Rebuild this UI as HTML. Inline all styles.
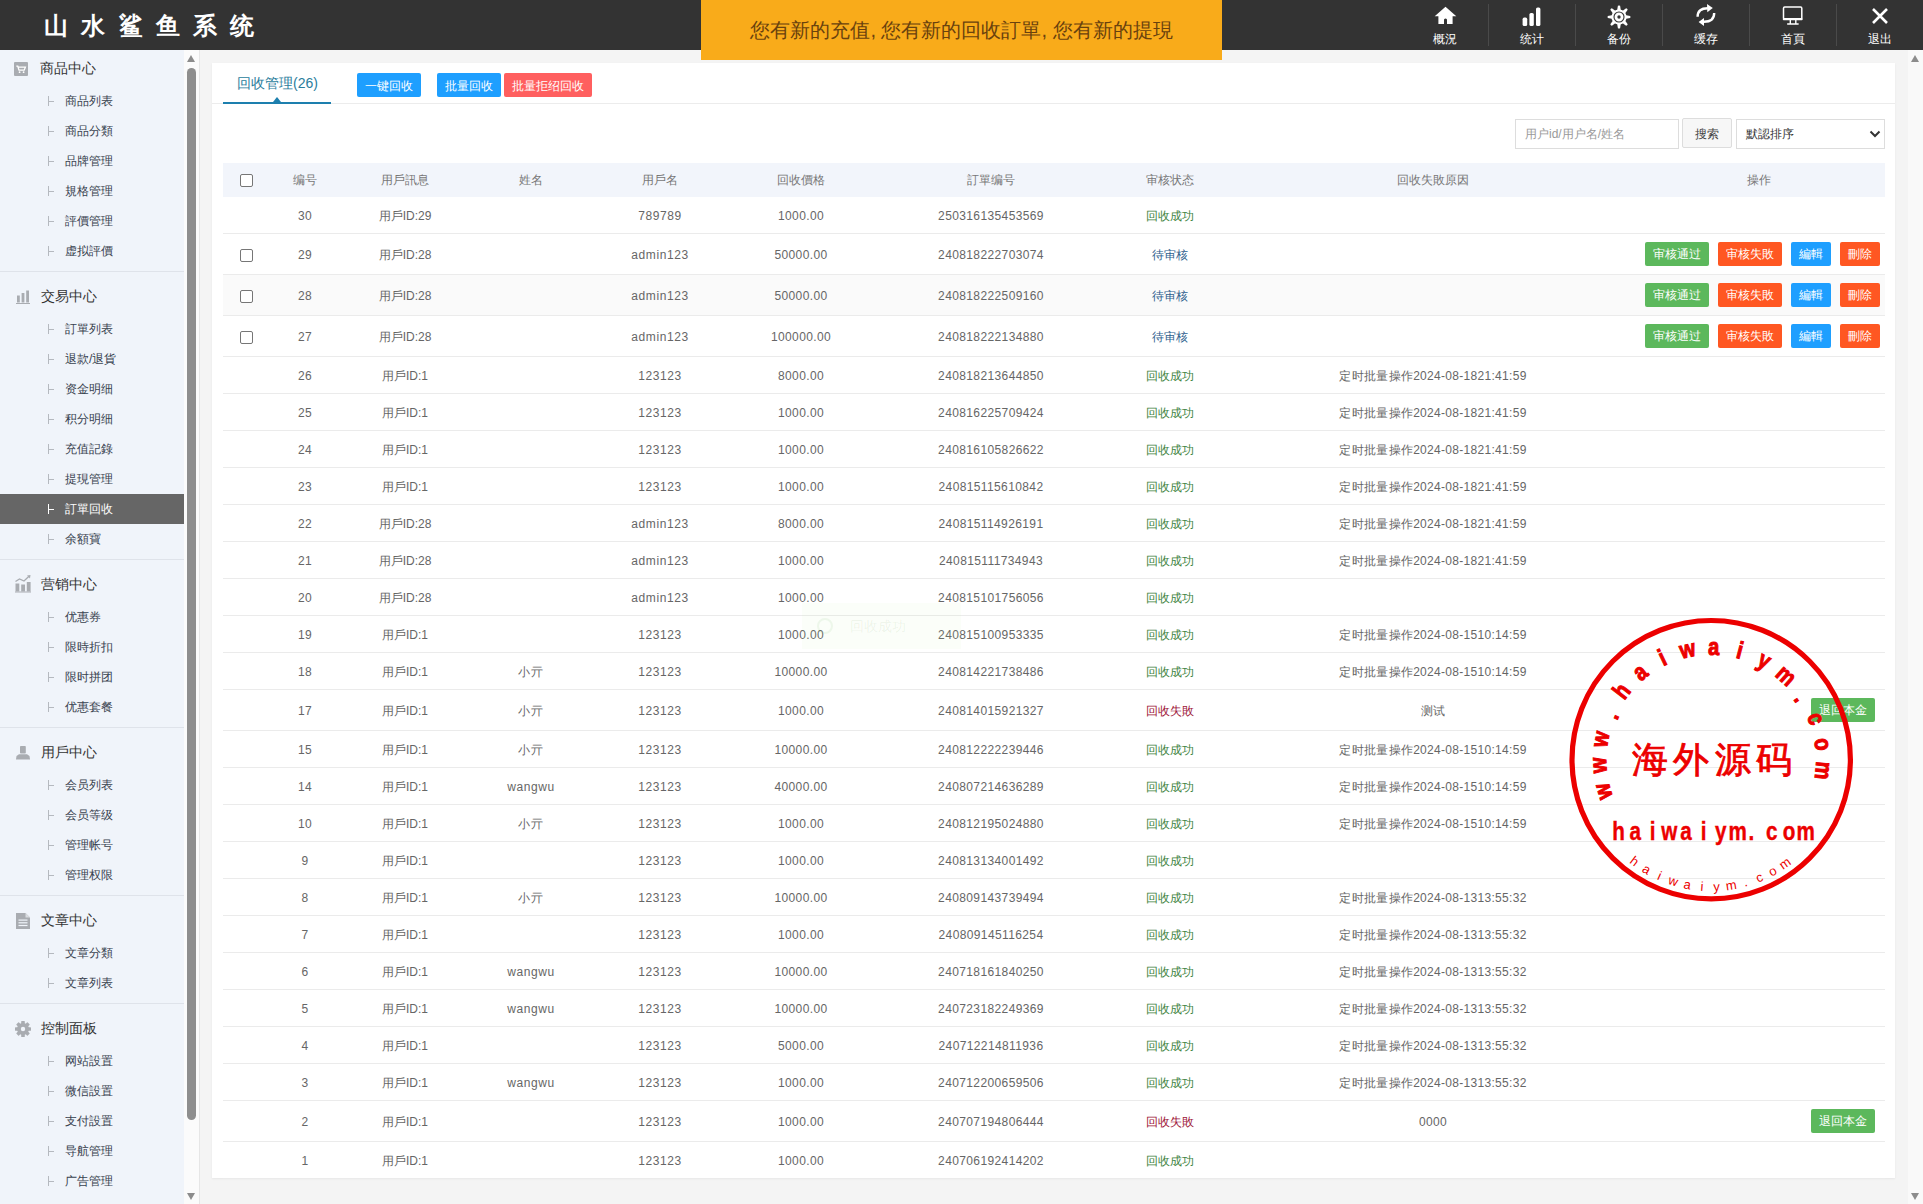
<!DOCTYPE html>
<html><head><meta charset="utf-8">
<style>
*{box-sizing:border-box;margin:0;padding:0}
html,body{width:1923px;height:1204px;overflow:hidden}
body{font-family:"Liberation Sans",sans-serif;background:#f4f4f4;position:relative;color:#666}
.hdr{position:absolute;left:0;top:0;width:1923px;height:50px;background:#333}
.logo{position:absolute;left:44px;top:10px;font-size:24px;line-height:32px;color:#fff;font-weight:bold;letter-spacing:13.3px;white-space:nowrap}
.nav{position:absolute;top:0;height:50px;width:87px;color:#fff;text-align:center}
.nav .ic{position:absolute;left:0;top:5px;width:87px;height:22px}
.nav .ic svg{display:block;margin:0 auto}
.nav .lb{position:absolute;left:0;top:31px;width:87px;font-size:12px;line-height:16px}
.nsep{position:absolute;top:4px;width:1px;height:42px;background:#4a4a4a}
.notice{position:absolute;left:701px;top:0;width:521px;height:60px;background:#f9ab1a;color:#6a420e;font-size:20px;line-height:24px;text-align:center;padding-top:18px;white-space:nowrap}
.side{position:absolute;left:0;top:50px;width:184px;height:1154px;background:#f0f4fa;overflow:hidden}
.side>div{position:absolute;left:0;width:184px;height:30px;line-height:30px;white-space:nowrap}
.mh .mi{position:absolute;left:14px;top:8px;width:18px;height:18px}
.mh .mi svg{display:block}
.mh .mt{position:absolute;left:39px;top:0;font-size:14px;color:#333}
.ms .tree{position:absolute;left:48px;top:10px;width:6px;height:10px;border-left:1px solid #b5b9bf}
.ms .tree:after{content:"";position:absolute;left:0;top:5px;width:5px;height:1px;background:#b5b9bf}
.ms .st2{position:absolute;left:65px;top:0;font-size:12px;color:#38424f}
.ms.act{background:#666}
.ms.act .st2{color:#fff}
.ms.act .tree{border-left-color:#fff}
.ms.act .tree:after{background:#fff}
.side .sep{height:1px;background:#dfe3ea;width:184px}
.sscroll{position:absolute;left:184px;top:50px;width:15px;height:1154px;background:#fbfbfb}
.sline{position:absolute;left:199px;top:50px;width:1px;height:1154px;background:#e6e6e6}
.sthumb{position:absolute;left:187px;top:68px;width:9px;height:1052px;border-radius:5px;background:#8e8e8e}
.arr-up{position:absolute;width:0;height:0;border-left:4.5px solid transparent;border-right:4.5px solid transparent;border-bottom:7px solid #8c8c8c}
.arr-dn{position:absolute;width:0;height:0;border-left:4.5px solid transparent;border-right:4.5px solid transparent;border-top:7px solid #8c8c8c}
.rscroll{position:absolute;left:1908px;top:50px;width:15px;height:1154px;background:#f9f9f9}
.panel{position:absolute;left:212px;top:63px;width:1683px;height:1115px;background:#fff;box-shadow:0 1px 2px rgba(0,0,0,.06)}
.tabline{position:absolute;left:0;top:40px;width:1683px;height:1px;background:#ececec}
.tab{position:absolute;left:25px;top:10px;font-size:14px;line-height:20px;color:#2a7d9c;white-space:nowrap}
.tabbar{position:absolute;left:11px;top:39px;width:108px;height:2px;background:#1d7fae}
.tabtri{position:absolute;left:61px;top:34px;width:0;height:0;border-left:4.5px solid transparent;border-right:4.5px solid transparent;border-bottom:5px solid #1d7fae}
.tb{position:absolute;top:10px;height:24px;line-height:26px;font-size:12px;color:#fff;text-align:center;border-radius:2px;white-space:nowrap}
.inp{position:absolute;left:1303px;top:56px;width:164px;height:30px;border:1px solid #ddd;font-size:12px;line-height:28px;color:#999;padding-left:9px;white-space:nowrap}
.sbtn{position:absolute;left:1470px;top:55px;width:50px;height:30px;border:1px solid #ddd;background:#f7f7f7;font-size:12px;line-height:30px;color:#444;text-align:center;border-radius:2px}
.sel{position:absolute;left:1524px;top:56px;width:149px;height:30px;border:1px solid #ddd;font-size:12px;line-height:28px;color:#333;padding-left:9px;white-space:nowrap}
.sel svg{position:absolute;right:3px;top:10px}
table{position:absolute;left:11px;top:100px;width:1662px;border-collapse:collapse;table-layout:fixed;font-size:12px;line-height:16px;color:#666}
th{height:34px;background:#f2f5fb;font-weight:normal;color:#777;text-align:center;padding:0}
td{height:37px;text-align:center;padding:2px 0 0 0;border-bottom:1px solid #ebebeb;white-space:nowrap}
tr.tall td{height:41px}
tbody tr:first-child td{height:36px;padding-top:2px}
tr.tall td{padding-top:3px}
tr.tall td.opc{padding-top:0}
tr.alt td{background:#fafafa}
.n{letter-spacing:.38px}
.u{letter-spacing:.6px}
.r{letter-spacing:.3px}
.cb{display:inline-block;width:13px;height:13px;border:1px solid #767676;border-radius:2px;background:#fff;vertical-align:middle}
.st.ok{color:#438543}
.st.wait{color:#2f5f8e}
.st.fail{color:#9e1639}
.opc{text-align:right;padding-right:5px;padding-top:0}
.ops{font-size:0;white-space:nowrap}
.bt{display:inline-block;height:24px;line-height:24px;font-size:12px;font-weight:normal;color:#fff;padding:0 8px;border-radius:2px;margin-left:9px}
.bt.g{background:#5cb85c}
.bt.o{background:#ff5722}
.bt.b{background:#1e9fff}
.ops.rf{margin-right:5px}
.toast{position:absolute;left:802px;top:603px;width:159px;height:46px;background:rgba(200,235,170,.07);font-size:14px;line-height:46px;color:rgba(60,120,40,.08);white-space:nowrap}
.toast i{position:absolute;left:15px;top:15px;width:16px;height:16px;border-radius:50%;border:2px solid rgba(80,160,60,.08)}
.toast span{position:absolute;left:48px;top:0}
.stamp{position:absolute;left:1560px;top:608px;width:304px;height:304px}
</style></head>
<body>
<div class="hdr">
 <div class="logo">山水鲨鱼系统</div>
 <div class="nav" style="left:1401px"><div class="ic"><svg width="24" height="20" viewBox="0 0 24 20"><path d="M12.5 1.8 L23.3 11.2 L19.6 11.2 L19.6 19 L14 19 L14 14.5 Q12.5 12.6 11 14.5 L11 19 L5.4 19 L5.4 11.2 L1.7 11.2 Z" fill="#fff"/></svg></div><div class="lb">概況</div></div>
 <div class="nsep" style="left:1488px"></div>
 <div class="nav" style="left:1488px"><div class="ic"><svg width="20" height="20" viewBox="0 0 20 20" style="margin-top:2px"><rect x="0.6" y="10.6" width="4.6" height="8.4" rx="1.6" fill="#fff"/><rect x="7.4" y="6" width="4.4" height="13" rx="1.6" fill="#fff"/><rect x="14" y="0.5" width="4.4" height="18.5" rx="1.6" fill="#fff"/></svg></div><div class="lb">统计</div></div>
 <div class="nsep" style="left:1575px"></div>
 <div class="nav" style="left:1575px"><div class="ic"><svg width="24" height="24" viewBox="0 0 24 24"><g fill="#fff"><path d="M10 6.2 L10.9 0.8 Q12 0.3 13.1 0.8 L14 6.2 Z" transform="rotate(0 12 12)"/><path d="M10 6.2 L10.9 0.8 Q12 0.3 13.1 0.8 L14 6.2 Z" transform="rotate(45 12 12)"/><path d="M10 6.2 L10.9 0.8 Q12 0.3 13.1 0.8 L14 6.2 Z" transform="rotate(90 12 12)"/><path d="M10 6.2 L10.9 0.8 Q12 0.3 13.1 0.8 L14 6.2 Z" transform="rotate(135 12 12)"/><path d="M10 6.2 L10.9 0.8 Q12 0.3 13.1 0.8 L14 6.2 Z" transform="rotate(180 12 12)"/><path d="M10 6.2 L10.9 0.8 Q12 0.3 13.1 0.8 L14 6.2 Z" transform="rotate(225 12 12)"/><path d="M10 6.2 L10.9 0.8 Q12 0.3 13.1 0.8 L14 6.2 Z" transform="rotate(270 12 12)"/><path d="M10 6.2 L10.9 0.8 Q12 0.3 13.1 0.8 L14 6.2 Z" transform="rotate(315 12 12)"/><circle cx="12" cy="12" r="7.6"/></g><circle cx="12" cy="12" r="5" fill="none" stroke="#333" stroke-width="1.1"/><circle cx="12" cy="12" r="1.7" fill="#333"/></svg></div><div class="lb">备份</div></div>
 <div class="nsep" style="left:1662px"></div>
 <div class="nav" style="left:1662px"><div class="ic"><svg width="22" height="24" viewBox="0 0 22 24" style="margin-top:-2px"><path d="M2.6 13.8 C2.6 8.2 6 5.2 12.8 5.2" fill="none" stroke="#fff" stroke-width="2.4"/><path d="M17.8 5.1 L12 0.9 L12.3 9.2 Z" fill="#fff"/><path d="M19.2 10 C19.2 15.6 15.8 18.8 9 18.8" fill="none" stroke="#fff" stroke-width="2.4"/><path d="M3.6 19 L9 14.9 L9 22.9 Z" fill="#fff"/></svg></div><div class="lb">缓存</div></div>
 <div class="nsep" style="left:1749px"></div>
 <div class="nav" style="left:1749px"><div class="ic"><svg width="22" height="20" viewBox="0 0 22 20"><rect x="1.5" y="2" width="18.3" height="12.2" rx="1.2" fill="none" stroke="#fff" stroke-width="1.5"/><rect x="0.8" y="13" width="19.8" height="2.3" rx="0.8" fill="#fff"/><rect x="7.6" y="15" width="1.4" height="4" fill="#fff"/><rect x="13.1" y="15" width="1.4" height="4" fill="#fff"/><rect x="5" y="18.2" width="11.8" height="1.5" rx="0.6" fill="#fff"/></svg></div><div class="lb">首頁</div></div>
 <div class="nsep" style="left:1836px"></div>
 <div class="nav" style="left:1836px"><div class="ic"><svg width="18" height="18" viewBox="0 0 18 18" style="margin-top:2px"><path d="M2 2 L16 16 M16 2 L2 16" stroke="#fff" stroke-width="2.6"/></svg></div><div class="lb">退出</div></div>
</div>

<div class="side">
<div class="mh" style="top:3px"><span class="mi" style="left:14px;top:9px"><svg width="14" height="14" viewBox="0 0 14 14"><rect x="0" y="0" width="14" height="14" rx="1" fill="#a9acb1"/><path d="M2.3 4.2 L3.8 4.2 L5 8.2 L10.2 8.2 L11.4 5.2 L4.6 5.2" fill="none" stroke="#fff" stroke-width="1.3"/><circle cx="5.6" cy="10.2" r="0.9" fill="#fff"/><circle cx="9.6" cy="10.2" r="0.9" fill="#fff"/></svg></span><span class="mt" style="left:40px">商品中心</span></div>
<div class="ms" style="top:36px"><span class="tree"></span><span class="st2">商品列表</span></div>
<div class="ms" style="top:66px"><span class="tree"></span><span class="st2">商品分類</span></div>
<div class="ms" style="top:96px"><span class="tree"></span><span class="st2">品牌管理</span></div>
<div class="ms" style="top:126px"><span class="tree"></span><span class="st2">規格管理</span></div>
<div class="ms" style="top:156px"><span class="tree"></span><span class="st2">評價管理</span></div>
<div class="ms" style="top:186px"><span class="tree"></span><span class="st2">虚拟評價</span></div>
<div class="sep" style="top:221px"></div>
<div class="mh" style="top:231px"><span class="mi" style="left:16px;top:9px"><svg width="14" height="14" viewBox="0 0 14 14"><rect x="1" y="5.5" width="2.8" height="7" fill="#a9acb1"/><rect x="5.6" y="3" width="2.8" height="9.5" fill="#a9acb1"/><rect x="10.2" y="0.5" width="2.8" height="12" fill="#a9acb1"/><rect x="0" y="13" width="14" height="1" fill="#a9acb1"/></svg></span><span class="mt" style="left:41px">交易中心</span></div>
<div class="ms" style="top:264px"><span class="tree"></span><span class="st2">訂單列表</span></div>
<div class="ms" style="top:294px"><span class="tree"></span><span class="st2">退款/退貨</span></div>
<div class="ms" style="top:324px"><span class="tree"></span><span class="st2">资金明细</span></div>
<div class="ms" style="top:354px"><span class="tree"></span><span class="st2">积分明细</span></div>
<div class="ms" style="top:384px"><span class="tree"></span><span class="st2">充值記錄</span></div>
<div class="ms" style="top:414px"><span class="tree"></span><span class="st2">提現管理</span></div>
<div class="ms act" style="top:444px"><span class="tree"></span><span class="st2">訂單回收</span></div>
<div class="ms" style="top:474px"><span class="tree"></span><span class="st2">余額寶</span></div>
<div class="sep" style="top:509px"></div>
<div class="mh" style="top:519px"><span class="mi" style="left:14px;top:6px"><svg width="18" height="18" viewBox="0 0 18 18"><path d="M1.5 6.5 L5.5 4 L10 6 L15 1.2" fill="none" stroke="#a9acb1" stroke-width="1.3"/><path d="M13 0.5 L16.5 0 L16 3.5 Z" fill="#a9acb1"/><rect x="1.5" y="8.5" width="3.8" height="8" fill="#a9acb1"/><rect x="7.2" y="9.5" width="3.8" height="7" fill="#a9acb1"/><rect x="12.8" y="7" width="3.8" height="9.5" fill="#a9acb1"/><rect x="1" y="16.5" width="16" height="1" fill="#a9acb1"/></svg></span><span class="mt" style="left:41px">营销中心</span></div>
<div class="ms" style="top:552px"><span class="tree"></span><span class="st2">优惠券</span></div>
<div class="ms" style="top:582px"><span class="tree"></span><span class="st2">限時折扣</span></div>
<div class="ms" style="top:612px"><span class="tree"></span><span class="st2">限时拼团</span></div>
<div class="ms" style="top:642px"><span class="tree"></span><span class="st2">优惠套餐</span></div>
<div class="sep" style="top:677px"></div>
<div class="mh" style="top:687px"><span class="mi" style="left:16px;top:9px"><svg width="14" height="14" viewBox="0 0 14 14"><rect x="4" y="0" width="5.8" height="7.5" rx="0.8" fill="#a9acb1"/><path d="M0 13.5 L0.5 10 L3 8.3 L11 8.3 L13.5 10 L14 13.5 Z" fill="#a9acb1"/></svg></span><span class="mt" style="left:41px">用戶中心</span></div>
<div class="ms" style="top:720px"><span class="tree"></span><span class="st2">会员列表</span></div>
<div class="ms" style="top:750px"><span class="tree"></span><span class="st2">会员等级</span></div>
<div class="ms" style="top:780px"><span class="tree"></span><span class="st2">管理帐号</span></div>
<div class="ms" style="top:810px"><span class="tree"></span><span class="st2">管理权限</span></div>
<div class="sep" style="top:845px"></div>
<div class="mh" style="top:855px"><span class="mi" style="left:16px;top:8px"><svg width="14" height="16" viewBox="0 0 14 16"><path d="M0 0 L9.5 0 L14 4.5 L14 16 L0 16 Z" fill="#a9acb1"/><path d="M9.5 0 L9.5 4.5 L14 4.5 Z" fill="#d9dce0"/><rect x="2.5" y="6.5" width="9" height="1.2" fill="#f0f4fa"/><rect x="2.5" y="9.2" width="9" height="1.2" fill="#f0f4fa"/><rect x="2.5" y="11.9" width="9" height="1.2" fill="#f0f4fa"/></svg></span><span class="mt" style="left:41px">文章中心</span></div>
<div class="ms" style="top:888px"><span class="tree"></span><span class="st2">文章分類</span></div>
<div class="ms" style="top:918px"><span class="tree"></span><span class="st2">文章列表</span></div>
<div class="sep" style="top:953px"></div>
<div class="mh" style="top:963px"><span class="mi" style="left:15px;top:8px"><svg width="16" height="16" viewBox="0 0 16 16"><g fill="#a9acb1"><circle cx="8" cy="8" r="6"/><rect x="6.2" y="0" width="3.6" height="16" rx="0.6"/><rect x="6.2" y="0" width="3.6" height="16" rx="0.6" transform="rotate(45 8 8)"/><rect x="6.2" y="0" width="3.6" height="16" rx="0.6" transform="rotate(90 8 8)"/><rect x="6.2" y="0" width="3.6" height="16" rx="0.6" transform="rotate(135 8 8)"/></g><circle cx="8" cy="8" r="2.2" fill="#f0f4fa"/></svg></span><span class="mt" style="left:41px">控制面板</span></div>
<div class="ms" style="top:996px"><span class="tree"></span><span class="st2">网站設置</span></div>
<div class="ms" style="top:1026px"><span class="tree"></span><span class="st2">微信設置</span></div>
<div class="ms" style="top:1056px"><span class="tree"></span><span class="st2">支付設置</span></div>
<div class="ms" style="top:1086px"><span class="tree"></span><span class="st2">导航管理</span></div>
<div class="ms" style="top:1116px"><span class="tree"></span><span class="st2">广告管理</span></div>
</div>
<div class="sscroll"></div>
<div class="sline"></div>
<div class="arr-up" style="left:187px;top:55px"></div>
<div class="sthumb"></div>
<div class="arr-dn" style="left:187px;top:1193px"></div>

<div class="rscroll"></div>
<div class="arr-up" style="left:1911px;top:55px"></div>
<div class="arr-dn" style="left:1911px;top:1193px"></div>

<div class="panel">
 <div class="tabline"></div>
 <div class="tab">回收管理(26)</div>
 <div class="tabbar"></div>
 <div class="tabtri"></div>
 <div class="tb" style="left:145px;width:64px;background:#1e9fff">一键回收</div>
 <div class="tb" style="left:225px;width:64px;background:#1e9fff">批量回收</div>
 <div class="tb" style="left:292px;width:88px;background:#ff5f5f">批量拒绍回收</div>
 <div class="inp">用户id/用户名/姓名</div>
 <div class="sbtn">搜索</div>
 <div class="sel">默認排序<svg width="12" height="8" viewBox="0 0 12 8"><path d="M1.5 1.5 L6 6 L10.5 1.5" fill="none" stroke="#333" stroke-width="2"/></svg></div>
 <table>
  <colgroup><col style="width:46px"><col style="width:72px"><col style="width:128px"><col style="width:124px"><col style="width:134px"><col style="width:148px"><col style="width:232px"><col style="width:126px"><col style="width:400px"><col style="width:252px"></colgroup>
  <thead><tr><th><span class="cb"></span></th><th>编号</th><th>用戶訊息</th><th>姓名</th><th>用戶名</th><th>回收價格</th><th>訂單编号</th><th>审核状态</th><th>回收失敗原因</th><th>操作</th></tr></thead>
  <tbody>
<tr class=""><td></td><td class="n">30</td><td>用戶ID:29</td><td class="u"></td><td class="u">789789</td><td class="n">1000.00</td><td class="n">250316135453569</td><td class="st ok">回收成功</td><td class="r"></td><td class="opc"></td></tr>
<tr class="tall"><td><span class="cb"></span></td><td class="n">29</td><td>用戶ID:28</td><td class="u"></td><td class="u">admin123</td><td class="n">50000.00</td><td class="n">240818222703074</td><td class="st wait">待审核</td><td class="r"></td><td class="opc"><span class="ops"><b class="bt g">审核通过</b><b class="bt o">审核失敗</b><b class="bt b">編輯</b><b class="bt o e">刪除</b></span></td></tr>
<tr class="tall alt"><td><span class="cb"></span></td><td class="n">28</td><td>用戶ID:28</td><td class="u"></td><td class="u">admin123</td><td class="n">50000.00</td><td class="n">240818222509160</td><td class="st wait">待审核</td><td class="r"></td><td class="opc"><span class="ops"><b class="bt g">审核通过</b><b class="bt o">审核失敗</b><b class="bt b">編輯</b><b class="bt o e">刪除</b></span></td></tr>
<tr class="tall"><td><span class="cb"></span></td><td class="n">27</td><td>用戶ID:28</td><td class="u"></td><td class="u">admin123</td><td class="n">100000.00</td><td class="n">240818222134880</td><td class="st wait">待审核</td><td class="r"></td><td class="opc"><span class="ops"><b class="bt g">审核通过</b><b class="bt o">审核失敗</b><b class="bt b">編輯</b><b class="bt o e">刪除</b></span></td></tr>
<tr class=""><td></td><td class="n">26</td><td>用戶ID:1</td><td class="u"></td><td class="u">123123</td><td class="n">8000.00</td><td class="n">240818213644850</td><td class="st ok">回收成功</td><td class="r">定时批量操作2024-08-1821:41:59</td><td class="opc"></td></tr>
<tr class=""><td></td><td class="n">25</td><td>用戶ID:1</td><td class="u"></td><td class="u">123123</td><td class="n">1000.00</td><td class="n">240816225709424</td><td class="st ok">回收成功</td><td class="r">定时批量操作2024-08-1821:41:59</td><td class="opc"></td></tr>
<tr class=""><td></td><td class="n">24</td><td>用戶ID:1</td><td class="u"></td><td class="u">123123</td><td class="n">1000.00</td><td class="n">240816105826622</td><td class="st ok">回收成功</td><td class="r">定时批量操作2024-08-1821:41:59</td><td class="opc"></td></tr>
<tr class=""><td></td><td class="n">23</td><td>用戶ID:1</td><td class="u"></td><td class="u">123123</td><td class="n">1000.00</td><td class="n">240815115610842</td><td class="st ok">回收成功</td><td class="r">定时批量操作2024-08-1821:41:59</td><td class="opc"></td></tr>
<tr class=""><td></td><td class="n">22</td><td>用戶ID:28</td><td class="u"></td><td class="u">admin123</td><td class="n">8000.00</td><td class="n">240815114926191</td><td class="st ok">回收成功</td><td class="r">定时批量操作2024-08-1821:41:59</td><td class="opc"></td></tr>
<tr class=""><td></td><td class="n">21</td><td>用戶ID:28</td><td class="u"></td><td class="u">admin123</td><td class="n">1000.00</td><td class="n">240815111734943</td><td class="st ok">回收成功</td><td class="r">定时批量操作2024-08-1821:41:59</td><td class="opc"></td></tr>
<tr class=""><td></td><td class="n">20</td><td>用戶ID:28</td><td class="u"></td><td class="u">admin123</td><td class="n">1000.00</td><td class="n">240815101756056</td><td class="st ok">回收成功</td><td class="r"></td><td class="opc"></td></tr>
<tr class=""><td></td><td class="n">19</td><td>用戶ID:1</td><td class="u"></td><td class="u">123123</td><td class="n">1000.00</td><td class="n">240815100953335</td><td class="st ok">回收成功</td><td class="r">定时批量操作2024-08-1510:14:59</td><td class="opc"></td></tr>
<tr class=""><td></td><td class="n">18</td><td>用戶ID:1</td><td class="u">小亓</td><td class="u">123123</td><td class="n">10000.00</td><td class="n">240814221738486</td><td class="st ok">回收成功</td><td class="r">定时批量操作2024-08-1510:14:59</td><td class="opc"></td></tr>
<tr class="tall"><td></td><td class="n">17</td><td>用戶ID:1</td><td class="u">小亓</td><td class="u">123123</td><td class="n">1000.00</td><td class="n">240814015921327</td><td class="st fail">回收失敗</td><td class="r">测试</td><td class="opc"><span class="ops rf"><b class="bt g">退回本金</b></span></td></tr>
<tr class=""><td></td><td class="n">15</td><td>用戶ID:1</td><td class="u">小亓</td><td class="u">123123</td><td class="n">10000.00</td><td class="n">240812222239446</td><td class="st ok">回收成功</td><td class="r">定时批量操作2024-08-1510:14:59</td><td class="opc"></td></tr>
<tr class=""><td></td><td class="n">14</td><td>用戶ID:1</td><td class="u">wangwu</td><td class="u">123123</td><td class="n">40000.00</td><td class="n">240807214636289</td><td class="st ok">回收成功</td><td class="r">定时批量操作2024-08-1510:14:59</td><td class="opc"></td></tr>
<tr class=""><td></td><td class="n">10</td><td>用戶ID:1</td><td class="u">小亓</td><td class="u">123123</td><td class="n">1000.00</td><td class="n">240812195024880</td><td class="st ok">回收成功</td><td class="r">定时批量操作2024-08-1510:14:59</td><td class="opc"></td></tr>
<tr class=""><td></td><td class="n">9</td><td>用戶ID:1</td><td class="u"></td><td class="u">123123</td><td class="n">1000.00</td><td class="n">240813134001492</td><td class="st ok">回收成功</td><td class="r"></td><td class="opc"></td></tr>
<tr class=""><td></td><td class="n">8</td><td>用戶ID:1</td><td class="u">小亓</td><td class="u">123123</td><td class="n">10000.00</td><td class="n">240809143739494</td><td class="st ok">回收成功</td><td class="r">定时批量操作2024-08-1313:55:32</td><td class="opc"></td></tr>
<tr class=""><td></td><td class="n">7</td><td>用戶ID:1</td><td class="u"></td><td class="u">123123</td><td class="n">1000.00</td><td class="n">240809145116254</td><td class="st ok">回收成功</td><td class="r">定时批量操作2024-08-1313:55:32</td><td class="opc"></td></tr>
<tr class=""><td></td><td class="n">6</td><td>用戶ID:1</td><td class="u">wangwu</td><td class="u">123123</td><td class="n">10000.00</td><td class="n">240718161840250</td><td class="st ok">回收成功</td><td class="r">定时批量操作2024-08-1313:55:32</td><td class="opc"></td></tr>
<tr class=""><td></td><td class="n">5</td><td>用戶ID:1</td><td class="u">wangwu</td><td class="u">123123</td><td class="n">10000.00</td><td class="n">240723182249369</td><td class="st ok">回收成功</td><td class="r">定时批量操作2024-08-1313:55:32</td><td class="opc"></td></tr>
<tr class=""><td></td><td class="n">4</td><td>用戶ID:1</td><td class="u"></td><td class="u">123123</td><td class="n">5000.00</td><td class="n">240712214811936</td><td class="st ok">回收成功</td><td class="r">定时批量操作2024-08-1313:55:32</td><td class="opc"></td></tr>
<tr class=""><td></td><td class="n">3</td><td>用戶ID:1</td><td class="u">wangwu</td><td class="u">123123</td><td class="n">1000.00</td><td class="n">240712200659506</td><td class="st ok">回收成功</td><td class="r">定时批量操作2024-08-1313:55:32</td><td class="opc"></td></tr>
<tr class="tall"><td></td><td class="n">2</td><td>用戶ID:1</td><td class="u"></td><td class="u">123123</td><td class="n">1000.00</td><td class="n">240707194806444</td><td class="st fail">回收失敗</td><td class="r">0000</td><td class="opc"><span class="ops rf"><b class="bt g">退回本金</b></span></td></tr>
<tr class=""><td></td><td class="n">1</td><td>用戶ID:1</td><td class="u"></td><td class="u">123123</td><td class="n">1000.00</td><td class="n">240706192414202</td><td class="st ok">回收成功</td><td class="r"></td><td class="opc"></td></tr>
  </tbody>
 </table>
</div>
<div class="toast"><i></i><span>回收成功</span></div>

<div class="stamp"><svg width="304" height="304" viewBox="0 0 304 304" style="overflow:visible"><circle cx="151.2" cy="151.7" r="139.2" fill="none" stroke="#ec0000" stroke-width="5.2"/><text transform="translate(42.8,183.6) rotate(-106.4) scale(1,1.2)" x="0" y="0" text-anchor="middle" dominant-baseline="central" font-family="Liberation Sans" font-weight="bold" font-size="20" fill="#ec0000" stroke="#ec0000" stroke-width="0.9">w</text><text transform="translate(38.3,157.5) rotate(-92.9) scale(1,1.2)" x="0" y="0" text-anchor="middle" dominant-baseline="central" font-family="Liberation Sans" font-weight="bold" font-size="20" fill="#ec0000" stroke="#ec0000" stroke-width="0.9">w</text><text transform="translate(40.1,131.1) rotate(-79.5) scale(1,1.2)" x="0" y="0" text-anchor="middle" dominant-baseline="central" font-family="Liberation Sans" font-weight="bold" font-size="20" fill="#ec0000" stroke="#ec0000" stroke-width="0.9">w</text><text transform="translate(50.7,107.0) rotate(-66.0) scale(1,1.2)" x="0" y="0" text-anchor="middle" dominant-baseline="central" font-family="Liberation Sans" font-weight="bold" font-size="20" fill="#ec0000" stroke="#ec0000" stroke-width="0.9">.</text><text transform="translate(61.5,83.0) rotate(-52.6) scale(1,1.2)" x="0" y="0" text-anchor="middle" dominant-baseline="central" font-family="Liberation Sans" font-weight="bold" font-size="20" fill="#ec0000" stroke="#ec0000" stroke-width="0.9">h</text><text transform="translate(79.9,64.0) rotate(-39.1) scale(1,1.2)" x="0" y="0" text-anchor="middle" dominant-baseline="central" font-family="Liberation Sans" font-weight="bold" font-size="20" fill="#ec0000" stroke="#ec0000" stroke-width="0.9">a</text><text transform="translate(102.3,49.8) rotate(-25.6) scale(1,1.2)" x="0" y="0" text-anchor="middle" dominant-baseline="central" font-family="Liberation Sans" font-weight="bold" font-size="20" fill="#ec0000" stroke="#ec0000" stroke-width="0.9">i</text><text transform="translate(127.4,41.2) rotate(-12.2) scale(1,1.2)" x="0" y="0" text-anchor="middle" dominant-baseline="central" font-family="Liberation Sans" font-weight="bold" font-size="20" fill="#ec0000" stroke="#ec0000" stroke-width="0.9">w</text><text transform="translate(153.7,38.7) rotate(1.3) scale(1,1.2)" x="0" y="0" text-anchor="middle" dominant-baseline="central" font-family="Liberation Sans" font-weight="bold" font-size="20" fill="#ec0000" stroke="#ec0000" stroke-width="0.9">a</text><text transform="translate(180.0,42.4) rotate(14.7) scale(1,1.2)" x="0" y="0" text-anchor="middle" dominant-baseline="central" font-family="Liberation Sans" font-weight="bold" font-size="20" fill="#ec0000" stroke="#ec0000" stroke-width="0.9">i</text><text transform="translate(204.6,52.1) rotate(28.2) scale(1,1.2)" x="0" y="0" text-anchor="middle" dominant-baseline="central" font-family="Liberation Sans" font-weight="bold" font-size="20" fill="#ec0000" stroke="#ec0000" stroke-width="0.9">y</text><text transform="translate(226.3,67.3) rotate(41.7) scale(1,1.2)" x="0" y="0" text-anchor="middle" dominant-baseline="central" font-family="Liberation Sans" font-weight="bold" font-size="20" fill="#ec0000" stroke="#ec0000" stroke-width="0.9">m</text><text transform="translate(241.4,88.8) rotate(55.1) scale(1,1.2)" x="0" y="0" text-anchor="middle" dominant-baseline="central" font-family="Liberation Sans" font-weight="bold" font-size="20" fill="#ec0000" stroke="#ec0000" stroke-width="0.9">.</text><text transform="translate(256.4,110.4) rotate(68.6) scale(1,1.2)" x="0" y="0" text-anchor="middle" dominant-baseline="central" font-family="Liberation Sans" font-weight="bold" font-size="20" fill="#ec0000" stroke="#ec0000" stroke-width="0.9">c</text><text transform="translate(263.1,136.1) rotate(82.0) scale(1,1.2)" x="0" y="0" text-anchor="middle" dominant-baseline="central" font-family="Liberation Sans" font-weight="bold" font-size="20" fill="#ec0000" stroke="#ec0000" stroke-width="0.9">o</text><text transform="translate(263.7,162.5) rotate(95.5) scale(1,1.2)" x="0" y="0" text-anchor="middle" dominant-baseline="central" font-family="Liberation Sans" font-weight="bold" font-size="20" fill="#ec0000" stroke="#ec0000" stroke-width="0.9">m</text><text transform="translate(74.6,253.0) rotate(37.1)" x="0" y="0" text-anchor="middle" dominant-baseline="central" font-family="Liberation Sans" font-size="13" fill="#ec0000">h</text><text transform="translate(86.7,261.1) rotate(30.5)" x="0" y="0" text-anchor="middle" dominant-baseline="central" font-family="Liberation Sans" font-size="13" fill="#ec0000">a</text><text transform="translate(99.7,267.8) rotate(23.9)" x="0" y="0" text-anchor="middle" dominant-baseline="central" font-family="Liberation Sans" font-size="13" fill="#ec0000">i</text><text transform="translate(113.4,272.9) rotate(17.3)" x="0" y="0" text-anchor="middle" dominant-baseline="central" font-family="Liberation Sans" font-size="13" fill="#ec0000">w</text><text transform="translate(127.5,276.5) rotate(10.7)" x="0" y="0" text-anchor="middle" dominant-baseline="central" font-family="Liberation Sans" font-size="13" fill="#ec0000">a</text><text transform="translate(142.0,278.4) rotate(4.1)" x="0" y="0" text-anchor="middle" dominant-baseline="central" font-family="Liberation Sans" font-size="13" fill="#ec0000">i</text><text transform="translate(156.6,278.6) rotate(-2.4)" x="0" y="0" text-anchor="middle" dominant-baseline="central" font-family="Liberation Sans" font-size="13" fill="#ec0000">y</text><text transform="translate(171.1,277.1) rotate(-9.0)" x="0" y="0" text-anchor="middle" dominant-baseline="central" font-family="Liberation Sans" font-size="13" fill="#ec0000">m</text><text transform="translate(185.4,274.0) rotate(-15.6)" x="0" y="0" text-anchor="middle" dominant-baseline="central" font-family="Liberation Sans" font-size="13" fill="#ec0000">.</text><text transform="translate(199.2,269.3) rotate(-22.2)" x="0" y="0" text-anchor="middle" dominant-baseline="central" font-family="Liberation Sans" font-size="13" fill="#ec0000">c</text><text transform="translate(212.4,263.0) rotate(-28.8)" x="0" y="0" text-anchor="middle" dominant-baseline="central" font-family="Liberation Sans" font-size="13" fill="#ec0000">o</text><text transform="translate(224.8,255.2) rotate(-35.4)" x="0" y="0" text-anchor="middle" dominant-baseline="central" font-family="Liberation Sans" font-size="13" fill="#ec0000">m</text><text x="0" y="0" text-anchor="middle" font-family="Liberation Sans" font-weight="bold" font-size="24" fill="#ec0000" stroke="#ec0000" stroke-width="0.4" transform="translate(58.5,232) scale(0.86,1.04)">h</text><text x="0" y="0" text-anchor="middle" font-family="Liberation Sans" font-weight="bold" font-size="24" fill="#ec0000" stroke="#ec0000" stroke-width="0.4" transform="translate(75.3,232) scale(0.86,1.04)">a</text><text x="0" y="0" text-anchor="middle" font-family="Liberation Sans" font-weight="bold" font-size="24" fill="#ec0000" stroke="#ec0000" stroke-width="0.4" transform="translate(92.6,232) scale(0.86,1.04)">i</text><text x="0" y="0" text-anchor="middle" font-family="Liberation Sans" font-weight="bold" font-size="24" fill="#ec0000" stroke="#ec0000" stroke-width="0.4" transform="translate(109.4,232) scale(0.86,1.04)">w</text><text x="0" y="0" text-anchor="middle" font-family="Liberation Sans" font-weight="bold" font-size="24" fill="#ec0000" stroke="#ec0000" stroke-width="0.4" transform="translate(126.1,232) scale(0.86,1.04)">a</text><text x="0" y="0" text-anchor="middle" font-family="Liberation Sans" font-weight="bold" font-size="24" fill="#ec0000" stroke="#ec0000" stroke-width="0.4" transform="translate(143.5,232) scale(0.86,1.04)">i</text><text x="0" y="0" text-anchor="middle" font-family="Liberation Sans" font-weight="bold" font-size="24" fill="#ec0000" stroke="#ec0000" stroke-width="0.4" transform="translate(160.8,232) scale(0.86,1.04)">y</text><text x="0" y="0" text-anchor="middle" font-family="Liberation Sans" font-weight="bold" font-size="24" fill="#ec0000" stroke="#ec0000" stroke-width="0.4" transform="translate(177.6,232) scale(0.86,1.04)">m</text><text x="0" y="0" text-anchor="middle" font-family="Liberation Sans" font-weight="bold" font-size="24" fill="#ec0000" stroke="#ec0000" stroke-width="0.4" transform="translate(191.3,232) scale(0.86,1.04)">.</text><text x="0" y="0" text-anchor="middle" font-family="Liberation Sans" font-weight="bold" font-size="24" fill="#ec0000" stroke="#ec0000" stroke-width="0.4" transform="translate(211.7,232) scale(0.86,1.04)">c</text><text x="0" y="0" text-anchor="middle" font-family="Liberation Sans" font-weight="bold" font-size="24" fill="#ec0000" stroke="#ec0000" stroke-width="0.4" transform="translate(229.0,232) scale(0.86,1.04)">o</text><text x="0" y="0" text-anchor="middle" font-family="Liberation Sans" font-weight="bold" font-size="24" fill="#ec0000" stroke="#ec0000" stroke-width="0.4" transform="translate(245.7,232) scale(0.86,1.04)">m</text><text x="72" y="152" textLength="160" lengthAdjust="spacing" dominant-baseline="central" font-family="Liberation Serif" font-weight="normal" font-size="36" fill="#ec0000" stroke="#ec0000" stroke-width="0.8">海外源码</text></svg></div>
<div class="notice">您有新的充值, 您有新的回收訂單, 您有新的提現</div>
</body></html>
